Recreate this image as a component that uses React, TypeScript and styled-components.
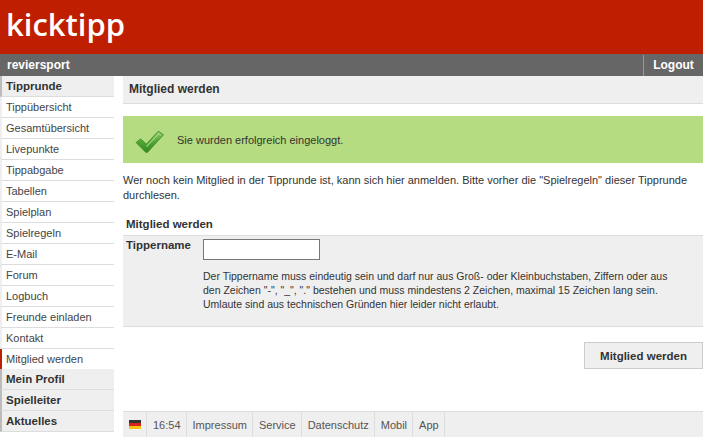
import React from 'react';
import styled, { createGlobalStyle } from 'styled-components';

const GlobalStyle = createGlobalStyle`
  html, body {
    margin: 0;
    padding: 0;
    background: #fff;
  }
  body {
    font-family: "Liberation Sans", Arial, sans-serif;
    font-size: 11px;
    color: #333;
  }
`;

const tippItems = [
  'Tippübersicht',
  'Gesamtübersicht',
  'Livepunkte',
  'Tippabgabe',
  'Tabellen',
  'Spielplan',
  'Spielregeln',
  'E-Mail',
  'Forum',
  'Logbuch',
  'Freunde einladen',
  'Kontakt',
];

const footerLinks = ['16:54', 'Impressum', 'Service', 'Datenschutz', 'Mobil', 'App'];

const App: React.FC = () => {
  return (
    <Page>
      <GlobalStyle />
      <Header>
        <Logo>kicktipp</Logo>
      </Header>
      <NavBar>
        <GroupName>reviersport</GroupName>
        <Logout>Logout</Logout>
      </NavBar>
      <Body>
        <Sidebar>
          <MenuHead>Tipprunde</MenuHead>
          {tippItems.map(item => (
            <MenuItem key={item}>{item}</MenuItem>
          ))}
          <MenuItem active>Mitglied werden</MenuItem>
          <MenuHead>Mein Profil</MenuHead>
          <MenuHead>Spielleiter</MenuHead>
          <MenuHead>Aktuelles</MenuHead>
        </Sidebar>
        <Main>
          <Title>Mitglied werden</Title>
          <Success>
            <CheckIcon />
            <span>Sie wurden erfolgreich eingeloggt.</span>
          </Success>
          <Intro>
            Wer noch kein Mitglied in der Tipprunde ist, kann sich hier anmelden. Bitte vorher die "Spielregeln" dieser
            Tipprunde durchlesen.
          </Intro>
          <SectionTitle>Mitglied werden</SectionTitle>
          <FormPanel>
            <FieldLabel>Tippername</FieldLabel>
            <FieldBody>
              <NameInput type="text" />
              <Hint>
                Der Tippername muss eindeutig sein und darf nur aus Groß- oder Kleinbuchstaben, Ziffern oder aus
                <br />
                den Zeichen "-", "_", "." bestehen und muss mindestens 2 Zeichen, maximal 15 Zeichen lang sein.
                <br />
                Umlaute sind aus technischen Gründen hier leider nicht erlaubt.
              </Hint>
            </FieldBody>
          </FormPanel>
          <Actions>
            <SubmitButton type="button">Mitglied werden</SubmitButton>
          </Actions>
          <Footer>
            <FooterCell>
              <Flag />
            </FooterCell>
            {footerLinks.map(link => (
              <FooterCell key={link}>{link}</FooterCell>
            ))}
          </Footer>
        </Main>
      </Body>
    </Page>
  );
};

const CheckIcon: React.FC = () => (
  <CheckSvg viewBox="0 0 28 22" aria-hidden="true">
    <defs>
      <linearGradient id="tick" x1="0" y1="0" x2="0" y2="1">
        <stop offset="0" stopColor="#8cc96a" />
        <stop offset="0.55" stopColor="#4fa32f" />
        <stop offset="1" stopColor="#2f8a1e" />
      </linearGradient>
    </defs>
    <path
      d="M1 12 L5.5 8.5 L11 13.5 L22.5 1 L27.5 4.5 L12 21.5 L10.5 21.5 Z"
      fill="url(#tick)"
      stroke="#3c8a2a"
      strokeWidth="0.8"
      strokeLinejoin="round"
    />
    <path d="M11 16 L23 3.5 L25 5" fill="none" stroke="#a5d78c" strokeWidth="1" />
  </CheckSvg>
);

const Flag: React.FC = () => (
  <FlagSvg viewBox="0 0 12 9" aria-hidden="true">
    <rect width="12" height="3" fill="#333" />
    <rect y="3" width="12" height="3" fill="#d8241c" />
    <rect y="6" width="12" height="3" fill="#f5c21a" />
  </FlagSvg>
);

export default App;

const Page = styled.div`
  width: 703px;
`;
const Header = styled.header`
  height: 54px;
  background: #bf1e00;
  display: flex;
  align-items: center;
  padding-left: 6px;
`;
const Logo = styled.div`
  font-family: "Open Sans", sans-serif;
  font-size: 31px;
  font-weight: 600;
  line-height: 1;
  color: #fff;
  position: relative;
  top: -3px;
`;
const NavBar = styled.nav`
  height: 22px;
  background: #666;
  display: flex;
  justify-content: space-between;
  align-items: stretch;
  color: #fff;
  font-size: 12px;
  font-weight: bold;
`;
const GroupName = styled.div`
  padding-left: 7px;
  line-height: 22px;
`;
const Logout = styled.div`
  margin-top: 1px;
  border-left: 1px solid #999;
  width: 59px;
  text-align: center;
  line-height: 21px;
`;
const Body = styled.div`
  display: flex;
  align-items: flex-start;
  gap: 9px;
`;
const Sidebar = styled.aside`
  width: 114px;
  flex: none;
`;
const MenuHead = styled.div`
  height: 20px;
  line-height: 20px;
  padding-left: 4px;
  border-left: 2px solid #bbb;
  border-bottom: 1px solid #ddd;
  background: #efefef;
  font-size: 11.5px;
  font-weight: bold;
  color: #333;
`;
const MenuItem = styled.div<{ active?: boolean }>`
  height: 20px;
  line-height: 20px;
  padding-left: 4px;
  border-left: 2px solid ${props => (props.active ? '#bf1e00' : '#efefef')};
  border-bottom: ${props => (props.active ? 'none' : '1px solid #ddd')};
  font-size: 11px;
  color: #444;
`;
const Main = styled.main`
  flex: 1;
  display: flex;
  flex-direction: column;
`;
const Title = styled.h1`
  margin: 0;
  height: 27px;
  line-height: 27px;
  padding-left: 6px;
  background: #efefef;
  border-bottom: 1px solid #ddd;
  font-size: 12px;
  font-weight: bold;
  color: #333;
`;
const Success = styled.div`
  margin-top: 12px;
  height: 47px;
  background: #b5dc81;
  display: flex;
  align-items: center;
  gap: 13px;
  padding-left: 12px;
  color: #333;
  font-size: 11px;
`;
const CheckSvg = styled.svg`
  width: 29px;
  height: 23px;
  margin-top: 4px;
`;
const Intro = styled.p`
  margin: 10px 0 0;
  line-height: 15px;
  font-size: 11px;
  color: #333;
`;
const SectionTitle = styled.h2`
  margin: 14px 0 0;
  padding-left: 3px;
  height: 18px;
  line-height: 15px;
  font-size: 11.5px;
  font-weight: bold;
  color: #333;
`;
const FormPanel = styled.div`
  display: flex;
  height: 92px;
  box-sizing: border-box;
  background: #efefef;
  border-top: 1px solid #ddd;
  border-bottom: 1px solid #ddd;
`;
const FieldLabel = styled.div`
  width: 80px;
  padding: 3px 0 0 3px;
  box-sizing: border-box;
  font-size: 11.5px;
  font-weight: bold;
  color: #333;
`;
const FieldBody = styled.div`
  flex: 1;
  padding-top: 3px;
`;
const NameInput = styled.input`
  display: block;
  box-sizing: border-box;
  width: 117px;
  height: 21px;
  margin: 0;
  border: 1px solid #777;
  background: #fff;
  padding: 0;
`;
const Hint = styled.p`
  margin: 9px 0 0;
  line-height: 14px;
  font-size: 10.5px;
  color: #333;
`;
const Actions = styled.div`
  display: flex;
  justify-content: flex-end;
  margin-top: 15px;
`;
const SubmitButton = styled.button`
  width: 119px;
  height: 27px;
  padding: 0;
  background: #efefef;
  border: 1px solid #ccc;
  font-family: "Liberation Sans", Arial, sans-serif;
  font-size: 11.5px;
  font-weight: bold;
  color: #333;
`;
const Footer = styled.footer`
  margin-top: 42px;
  height: 26px;
  box-sizing: border-box;
  display: flex;
  align-items: stretch;
  background: #efefef;
  border-top: 1px solid #ddd;
`;
const FooterCell = styled.div`
  display: flex;
  align-items: center;
  padding: 0 5px 0 6px;
  border-right: 1px solid #ddd;
  font-size: 11px;
  color: #555;
`;
const FlagSvg = styled.svg`
  width: 12px;
  height: 9px;
  display: block;
`;
